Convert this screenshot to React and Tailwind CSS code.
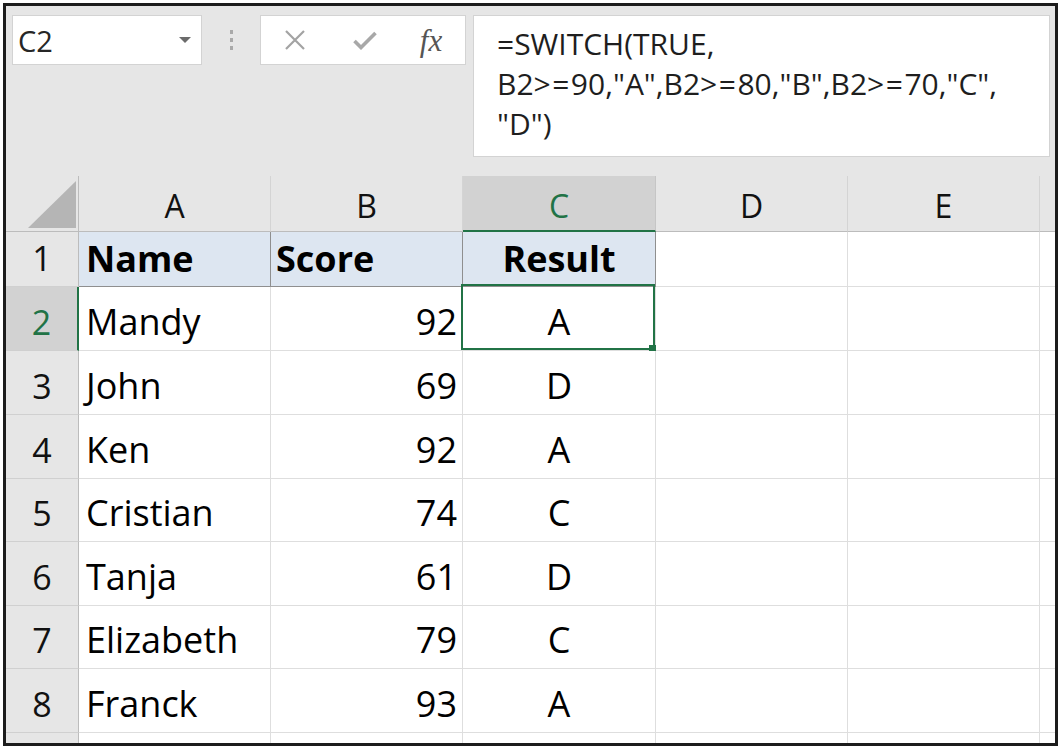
import React from "react";

const data = [
  ["Mandy", "92", "A"],
  ["John", "69", "D"],
  ["Ken", "92", "A"],
  ["Cristian", "74", "C"],
  ["Tanja", "61", "D"],
  ["Elizabeth", "79", "C"],
  ["Franck", "93", "A"],
];

const cellFont = "font-['Open_Sans',sans-serif]";

function ColHead({ label, active }) {
  if (active) {
    return (
      <div className={`bg-[#d2d2d2] border-r border-[#c6c6c6] border-b-2 border-b-[#217346] flex items-end justify-center pb-[8px] text-[32px] leading-none text-[#217346] ${cellFont}`}>
        {label}
      </div>
    );
  }
  return (
    <div className={`bg-[#e6e6e6] border-r border-b border-r-[#d4d4d4] border-b-[#bcbcbc] flex items-end justify-center pb-[9px] text-[32px] leading-none text-[#111] ${cellFont}`}>
      {label}
    </div>
  );
}

function RowHead({ n, active }) {
  if (active) {
    return (
      <div className={`bg-[#d2d2d2] border-r-2 border-r-[#217346] border-b border-b-[#cfcfcf] flex items-end justify-center pb-[11px] text-[34px] leading-none text-[#217346] ${cellFont}`}>
        {n}
      </div>
    );
  }
  return (
    <div className={`bg-[#e6e6e6] border-r border-b border-r-[#bcbcbc] border-b-[#d0d0d0] flex items-end justify-center pb-[11px] text-[34px] leading-none text-[#111] ${cellFont}`}>
      {n}
    </div>
  );
}

function Cell({ children, align = "left", cls = "" }) {
  const a =
    align === "left" ? "justify-start pl-[7px]" : align === "right" ? "justify-end pr-[5px]" : "justify-center";
  return (
    <div className={`relative bg-white border-r border-b border-[#dedede] flex items-end pb-[10px] text-[36px] leading-none text-black ${cellFont} ${a} ${cls}`}>
      {children}
    </div>
  );
}

function GE() {
  return <span className="tracking-[1.5px]">&gt;=</span>;
}

export default function App() {
  return (
    <div className="w-[1063px] h-[751px] bg-white pt-[3px] pl-[3px]">
      <div className="w-[1055px] h-[743px] border-[3px] border-[#1c1c1c] bg-[#e6e6e6] flex flex-col overflow-hidden">
        {/* Top bar */}
        <div className="h-[170px] shrink-0 flex items-start pt-[9px] pl-[6px]">
          <div className="w-[190px] h-[50px] bg-white border border-[#d3d3d3] flex items-center justify-between pl-[5px] pr-[10px]">
            <span className="font-['Open_Sans',sans-serif] text-[29px] leading-none text-[#262626]">C2</span>
            <svg width="12" height="6" viewBox="0 0 12 6">
              <path d="M0 0H12L6 6Z" fill="#6b6b6b" />
            </svg>
          </div>
          <div className="w-[58px] h-[50px] flex flex-col items-center justify-center gap-[4px]">
            <div className="w-[3px] h-[4px] bg-[#a9a9a9]" />
            <div className="w-[3px] h-[4px] bg-[#a9a9a9]" />
            <div className="w-[3px] h-[4px] bg-[#a9a9a9]" />
          </div>
          <div className="w-[206px] h-[50px] bg-white border border-[#d3d3d3] flex items-center">
            <div className="w-[68px] flex justify-center">
              <svg width="22" height="20" viewBox="0 0 22 20">
                <path d="M2 1L20 19M20 1L2 19" stroke="#a3a3a3" strokeWidth="2.2" fill="none" />
              </svg>
            </div>
            <div className="w-[72px] flex justify-center">
              <svg width="24" height="19" viewBox="0 0 24 19">
                <path d="M1.5 10L8 16.5L22.5 2" stroke="#a8a8a8" strokeWidth="3.6" fill="none" />
              </svg>
            </div>
            <div className="w-[60px] flex justify-center">
              <span className="font-['Liberation_Serif',serif] italic text-[31px] leading-none text-[#555]">fx</span>
            </div>
          </div>
          <div className="ml-[7px] w-[577px] h-[142px] bg-white border border-[#d3d3d3] pl-[23px] pt-[8px] font-['Open_Sans',sans-serif] text-[30px] leading-[40px] text-[#1e1e1e]">
            <div>=SWITCH(TRUE,</div>
            <div>
              B2<GE />90,"A",B2<GE />80,"B",B2<GE />70,"C",
            </div>
            <div>"D")</div>
          </div>
        </div>

        {/* Grid */}
        <div className="flex-1 grid grid-cols-[73px_192px_192px_193px_192px_192px_1fr] grid-rows-[56px_55px_64px_64px_64px_63px_64px_63px_64px_1fr]">
          {/* header row */}
          <div className="bg-[#e6e6e6] border-r border-b border-[#bcbcbc] flex items-end justify-end pr-[2px] pb-[3px]">
            <svg width="48" height="47" viewBox="0 0 48 47">
              <path d="M48 0V47H0Z" fill="#b5b5b5" />
            </svg>
          </div>
          <ColHead label="A" />
          <ColHead label="B" />
          <ColHead label="C" active />
          <ColHead label="D" />
          <ColHead label="E" />
          <div className="bg-[#e6e6e6] border-b border-[#bcbcbc]" />

          {/* row 1 */}
          <RowHead n="1" />
          <div className={`bg-[#dde6f1] border-r border-b border-[#8f8f8f] flex items-end pb-[9px] pl-[7px] text-[36px] font-bold leading-none text-black ${cellFont}`}>
            Name
          </div>
          <div className={`bg-[#dde6f1] border-r border-b border-[#8f8f8f] flex items-end pb-[9px] pl-[5px] text-[36px] font-bold leading-none text-black ${cellFont}`}>
            Score
          </div>
          <div className={`bg-[#dde6f1] border-r border-b border-[#8f8f8f] flex items-end justify-center pb-[9px] text-[36px] font-bold leading-none text-black ${cellFont}`}>
            Result
          </div>
          <div className="bg-white border-r border-b border-[#dedede]" />
          <div className="bg-white border-r border-b border-[#dedede]" />
          <div className="bg-white border-b border-[#dedede]" />

          {data.map((r, i) => (
            <React.Fragment key={i}>
              <RowHead n={String(i + 2)} active={i === 0} />
              <Cell>{r[0]}</Cell>
              <Cell align="right">{r[1]}</Cell>
              <Cell align="center">
                {r[2]}
                {i === 0 && (
                  <div className="absolute left-[-2px] top-[-3px] right-0 bottom-0 border-2 border-[#217346]">
                    <div className="absolute right-[-3px] bottom-[-4px] w-[7px] h-[7px] bg-[#217346]" />
                  </div>
                )}
              </Cell>
              <Cell />
              <Cell />
              <div className="bg-white border-b border-[#dedede]" />
            </React.Fragment>
          ))}

          {/* partial row */}
          <div className="bg-[#e6e6e6] border-r border-[#bcbcbc]" />
          <div className="bg-white border-r border-[#dedede]" />
          <div className="bg-white border-r border-[#dedede]" />
          <div className="bg-white border-r border-[#dedede]" />
          <div className="bg-white border-r border-[#dedede]" />
          <div className="bg-white border-r border-[#dedede]" />
          <div className="bg-white" />
        </div>
      </div>
    </div>
  );
}
